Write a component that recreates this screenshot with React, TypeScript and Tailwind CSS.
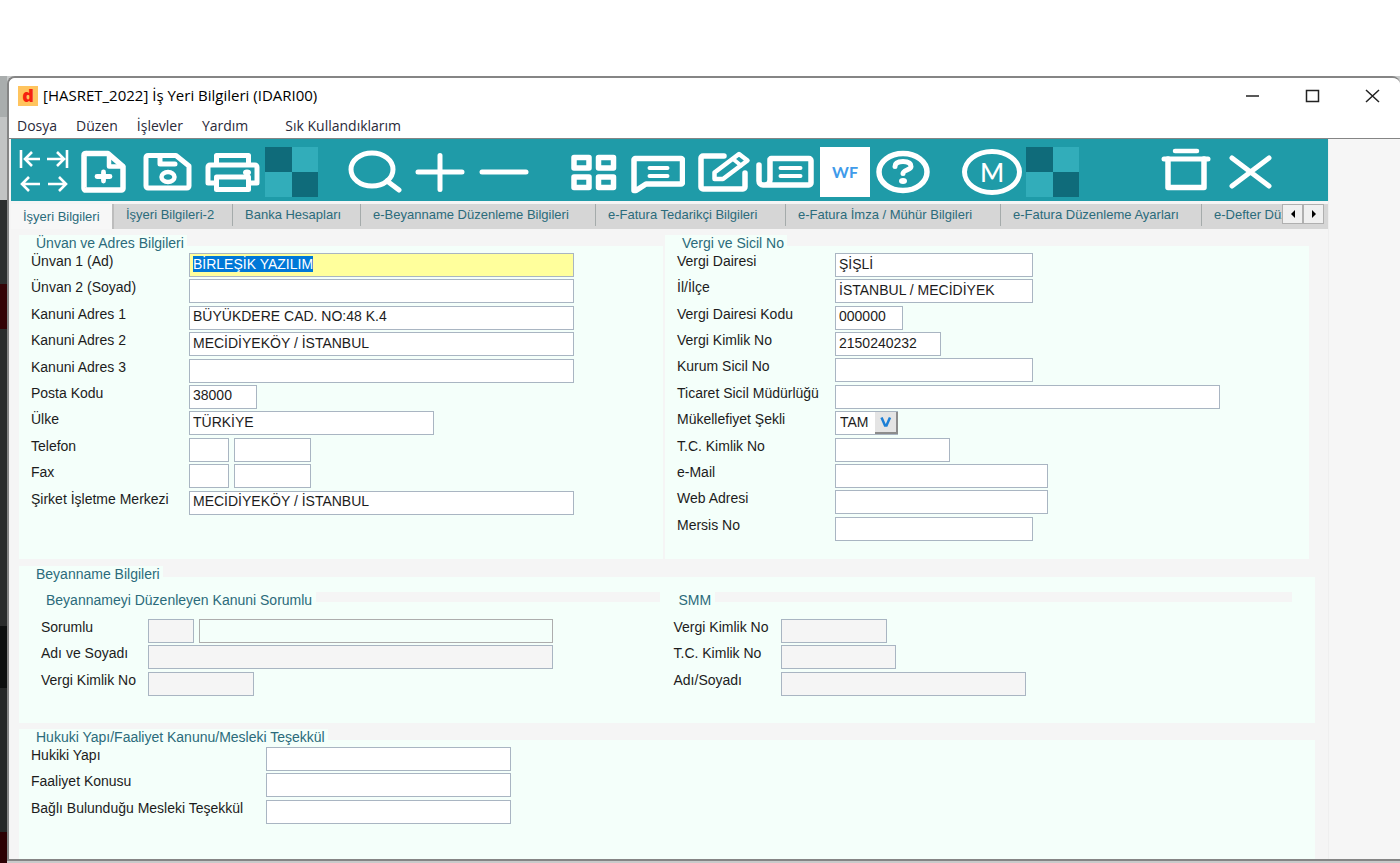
import { useEffect, useRef, type ReactNode } from "react"

interface FieldItem {
  id: string
  label: string
  inputs: { width: string; value?: string; look?: string }[]
}

const WHITE = "bg-white border-[#a9b5c2]"
const DISABLED = "bg-[#f5f5f5] border-[#a9b5c2]"

const unvanFields: FieldItem[] = [
  { id: "unvan1", label: "Ünvan 1 (Ad)", inputs: [{ width: "w-[385px]", value: "BİRLEŞİK YAZILIM", look: "bg-[#ffff9c] border-[#a9b5c2]" }] },
  { id: "unvan2", label: "Ünvan 2 (Soyad)", inputs: [{ width: "w-[385px]" }] },
  { id: "adres1", label: "Kanuni Adres 1", inputs: [{ width: "w-[385px]", value: "BÜYÜKDERE CAD. NO:48 K.4" }] },
  { id: "adres2", label: "Kanuni Adres 2", inputs: [{ width: "w-[385px]", value: "MECİDİYEKÖY / İSTANBUL" }] },
  { id: "adres3", label: "Kanuni Adres 3", inputs: [{ width: "w-[385px]" }] },
  { id: "posta", label: "Posta Kodu", inputs: [{ width: "w-[68px]", value: "38000" }] },
  { id: "ulke", label: "Ülke", inputs: [{ width: "w-[245px]", value: "TÜRKİYE" }] },
  { id: "telefon", label: "Telefon", inputs: [{ width: "w-[40px]" }, { width: "w-[77px]" }] },
  { id: "fax", label: "Fax", inputs: [{ width: "w-[40px]" }, { width: "w-[77px]" }] },
  { id: "merkez", label: "Şirket İşletme Merkezi", inputs: [{ width: "w-[385px]", value: "MECİDİYEKÖY / İSTANBUL" }] },
]

const vergiFields: FieldItem[] = [
  { id: "daire", label: "Vergi Dairesi", inputs: [{ width: "w-[198px]", value: "ŞİŞLİ" }] },
  { id: "ilce", label: "İl/İlçe", inputs: [{ width: "w-[198px]", value: "İSTANBUL / MECİDİYEK" }] },
  { id: "daireKodu", label: "Vergi Dairesi Kodu", inputs: [{ width: "w-[68px]", value: "000000" }] },
  { id: "vkn", label: "Vergi Kimlik No", inputs: [{ width: "w-[106px]", value: "2150240232" }] },
  { id: "kurum", label: "Kurum Sicil No", inputs: [{ width: "w-[198px]" }] },
  { id: "ticaret", label: "Ticaret Sicil Müdürlüğü", inputs: [{ width: "w-[385px]" }] },
  { id: "mukellef", label: "Mükellefiyet Şekli", inputs: [] },
  { id: "tckn", label: "T.C. Kimlik No", inputs: [{ width: "w-[115px]" }] },
  { id: "email", label: "e-Mail", inputs: [{ width: "w-[213px]" }] },
  { id: "web", label: "Web Adresi", inputs: [{ width: "w-[213px]" }] },
  { id: "mersis", label: "Mersis No", inputs: [{ width: "w-[198px]" }] },
]

const sorumluFields: FieldItem[] = [
  {
    id: "sorumlu",
    label: "Sorumlu",
    inputs: [
      { width: "w-[46px]", look: DISABLED },
      { width: "w-[354px]", look: "bg-[#f4fffa] border-[#adadad]" },
    ],
  },
  { id: "sorumluAd", label: "Adı ve Soyadı", inputs: [{ width: "w-[405px]", look: DISABLED }] },
  { id: "sorumluVkn", label: "Vergi Kimlik No", inputs: [{ width: "w-[106px]", look: DISABLED }] },
]

const smmFields: FieldItem[] = [
  { id: "smmVkn", label: "Vergi Kimlik No", inputs: [{ width: "w-[106px]", look: DISABLED }] },
  { id: "smmTckn", label: "T.C. Kimlik No", inputs: [{ width: "w-[115px]", look: DISABLED }] },
  { id: "smmAd", label: "Adı/Soyadı", inputs: [{ width: "w-[245px]", look: DISABLED }] },
]

const hukukiFields: FieldItem[] = [
  { id: "hukuki", label: "Hukiki Yapı", inputs: [{ width: "w-[245px]" }] },
  { id: "faaliyet", label: "Faaliyet Konusu", inputs: [{ width: "w-[245px]" }] },
  { id: "meslek", label: "Bağlı Bulunduğu Mesleki Teşekkül", inputs: [{ width: "w-[245px]" }] },
]

const tabs = [
  { title: "İşyeri Bilgileri-2", width: "w-[119px]" },
  { title: "Banka Hesapları", width: "w-[128px]" },
  { title: "e-Beyanname Düzenleme Bilgileri", width: "w-[235px]" },
  { title: "e-Fatura Tedarikçi Bilgileri", width: "w-[190px]" },
  { title: "e-Fatura İmza / Mühür Bilgileri", width: "w-[215px]" },
  { title: "e-Fatura Düzenleme Ayarları", width: "w-[201px]" },
]

function Fields({ items, labelWidth, height }: { items: FieldItem[]; labelWidth: string; height: string }) {
  return (
    <div className={`grid auto-rows-fr ${height}`}>
      {items.map((item) => (
        <div key={item.id} className="flex items-start">
          <label htmlFor={item.id} className={`shrink-0 whitespace-nowrap leading-[18px] ${labelWidth}`}>
            {item.label}
          </label>
          <div className="flex gap-[5px] pt-px">
            {item.id === "mukellef" && <SekilSelect />}
            {item.inputs.map((input, index) => (
              <input
                key={index}
                id={index === 0 ? item.id : `${item.id}-${index}`}
                aria-label={index === 0 ? undefined : item.label}
                type="text"
                defaultValue={input.value}
                className={`h-[24px] border px-[3px] pb-[3px] outline-none selection:bg-[#0078d7] selection:text-white ${input.width} ${input.look ?? WHITE}`}
              />
            ))}
          </div>
        </div>
      ))}
    </div>
  )
}

function SekilSelect() {
  return (
    <div className="relative">
      <select id="mukellef" className="h-[24px] w-[63px] appearance-none border border-[#a9b5c2] bg-white px-[4px] pb-[3px] outline-none">
        <option>TAM</option>
        <option>DAR</option>
      </select>
      <span className="pointer-events-none absolute top-px right-0 flex h-[22px] w-[23px] items-center justify-center border-r-2 border-b-2 border-[#8c8c8c] bg-[#e4e4e4]">
        <svg width="12" height="12" viewBox="0 0 12 12" fill="none" stroke="#1c7fd6" strokeWidth="2.500">
          <path d="M1.500 1.500l3.500 8h1.500l3.500-8" />
        </svg>
      </span>
    </div>
  )
}

function Group({ title, className, children }: { title: string; className?: string; children: ReactNode }) {
  return (
    <section className={`flex flex-col ${className ?? ""}`}>
      <h2 className="-mb-[6px] h-[17px] w-fit bg-[#f4fffa] pr-[3px] pl-[17px] leading-[17px] text-[#2b6b7b]">
        <span className="relative">{title}</span>
      </h2>
      <div className="flex-1 bg-[#f4fffa] pt-[6px]">{children}</div>
    </section>
  )
}

function SubGroup({ title, children }: { title: string; children: ReactNode }) {
  return (
    <section>
      <div className="flex h-[26px] items-start">
        <h3 className="pr-1 pl-[17px] leading-[17px] text-[#2b6b7b]">{title}</h3>
        <div className="h-[10px] flex-1 bg-[#f5f5f5]" />
      </div>
      <div className="pl-3">{children}</div>
    </section>
  )
}

function ToolButton({ label, width, className, children }: { label: string; width: number; className?: string; children: ReactNode }) {
  return (
    <button type="button" aria-label={label} className={`shrink-0 ${className ?? ""}`}>
      <svg
        width={width}
        height="50"
        viewBox={`0 0 ${width} 50`}
        fill="none"
        stroke="white"
        strokeWidth="5"
        strokeLinecap="round"
        strokeLinejoin="round"
        className="block"
      >
        {children}
      </svg>
    </button>
  )
}

function Checker({ className }: { className?: string }) {
  return (
    <div className={`grid h-[50px] w-[53px] shrink-0 grid-cols-2 ${className ?? ""}`}>
      <div className="bg-[#0f6b7a]" />
      <div className="bg-[#32adba]" />
      <div className="bg-[#32adba]" />
      <div className="bg-[#0f6b7a]" />
    </div>
  )
}

function Toolbar() {
  return (
    <div className="flex h-[62px] items-center bg-[#1f9ba8] pt-[4px] pr-[56px] pl-2">
      <div className="grid w-[50px] grid-cols-2 grid-rows-2">
        {[
          { label: "İlk kayıt", d: "M2 3v18M21 12H6M13 5l-7 7l7 7" },
          { label: "Son kayıt", d: "M23 3v18M3 12h17M13 5l7 7l-7 7" },
          { label: "Önceki kayıt", d: "M21 12H3M10 5l-7 7l7 7" },
          { label: "Sonraki kayıt", d: "M4 12h18M15 5l7 7l-7 7" },
        ].map((arrow) => (
          <button key={arrow.label} type="button" aria-label={arrow.label}>
            <svg width="25" height="25" viewBox="0 0 25 25" fill="none" stroke="white" strokeWidth="2.600" className="block">
              <path d={arrow.d} />
            </svg>
          </button>
        ))}
      </div>
      <ToolButton label="Yeni" width={46} className="ml-3">
        <path d="M5 6.500h22l15 13v22a1.500 1.500 0 0 1-1.500 1.500H5a1.500 1.500 0 0 1-2-1.500V8a1.500 1.500 0 0 1 2-1.500z" strokeWidth="5.500" />
        <path d="M28 8v11.500H42" strokeWidth="4.500" />
        <path d="M22.500 25v9M16 29.500h13" strokeWidth="4.800" />
      </ToolButton>
      <ToolButton label="Kaydet" width={50} className="ml-4">
        <path d="M5 8.500h28l13 10.500V39a2 2 0 0 1-2 2H5a2 2 0 0 1-2-2V10.500a2 2 0 0 1 2-2z" strokeWidth="5" />
        <path d="M17 9v8h15" strokeWidth="5" />
        <ellipse cx="25" cy="30" rx="6.500" ry="5" strokeWidth="4.500" />
      </ToolButton>
      <ToolButton label="Yazdır" width={55} className="ml-3">
        <path d="M11.500 17V8.500h32V17" />
        <path d="M11 36H3V20a2 2 0 0 1 2-2h45a2 2 0 0 1 2 2v16h-8" />
        <path d="M11.500 30h32v12.500h-32z" />
        <ellipse cx="42" cy="25.500" rx="4" ry="3" fill="white" stroke="none" />
      </ToolButton>
      <Checker className="ml-[5px]" />
      <ToolButton label="Ara" width={54} className="ml-[30px]">
        <ellipse cx="24" cy="22.500" rx="21" ry="16.500" />
        <path d="M39 34l12 9" />
      </ToolButton>
      <ToolButton label="Ekle" width={50} className="ml-[13px]">
        <path d="M25 8.500v34M3 25h44" />
      </ToolButton>
      <ToolButton label="Sil" width={50} className="ml-[14px]">
        <path d="M3 25h44" />
      </ToolButton>
      <ToolButton label="Liste" width={46} className="ml-[42px]">
        <path d="M3 10.500h15v10.500H3zM27.500 10.500h15v10.500h-15zM3 30h15v10.500H3zM27.500 30h15v10.500h-15z" strokeWidth="5.500" />
      </ToolButton>
      <ToolButton label="Mesaj" width={54} className="ml-[14px]">
        <path d="M4 11.500h46a1.500 1.500 0 0 1 1.500 1.500v22.500A1.500 1.500 0 0 1 50 37H15L5 43.500H3V12.500z" strokeWidth="5.500" />
        <path d="M18.500 21h18M18.500 29h18" strokeWidth="4" />
      </ToolButton>
      <ToolButton label="Düzenle" width={53} className="ml-[13px]">
        <path d="M26 9H5a2 2 0 0 0-2 2v29a2 2 0 0 0 2 2h40a2 2 0 0 0 2-2V26" strokeWidth="5.500" />
        <path d="M16.500 32v-6.500L41 7l8.500 6.500L25 32z" strokeWidth="4.500" />
        <path d="M35 12l8 6.500" strokeWidth="4" />
      </ToolButton>
      <ToolButton label="Haberler" width={58} className="ml-[5px]">
        <path d="M15 11.500h38a2 2 0 0 1 2 2V36a2 2 0 0 1-2 2H7a4 4 0 0 1-4-4V18M14 12.500V33a5 5 0 0 1-5 5" strokeWidth="5.500" />
        <path d="M24.500 21h20M24.500 29h20" strokeWidth="4" />
      </ToolButton>
      <button type="button" className="ml-[6px] h-[50px] w-[50px] shrink-0 bg-white font-['Lato'] text-[16px] font-bold text-[#3f9bea]">
        WF
      </button>
      <ToolButton label="Yardım" width={54} className="ml-[6px]">
        <ellipse cx="27" cy="25" rx="24" ry="18.500" strokeWidth="5.500" />
        <path d="M19 19.500c0-3.500 3.500-5 8-5s8 1.500 8 5c0 3.500-8 3.500-8 7" />
        <ellipse cx="27" cy="34" rx="4" ry="3" fill="white" stroke="none" />
      </ToolButton>
      <button
        type="button"
        className="ml-8 flex h-[46px] w-[60px] shrink-0 items-center justify-center rounded-[50%] border-[5px] border-white font-['Lato'] text-[26px] font-medium text-white"
      >
        M
      </button>
      <Checker className="ml-1" />
      <ToolButton label="Çöp kutusu" width={50} className="ml-auto">
        <path d="M14 4h22" strokeWidth="4.500" />
        <path d="M3 12h44" />
        <path d="M7 12v28.500h36V12" strokeWidth="5.500" />
      </ToolButton>
      <ToolButton label="Kapat" width={43} className="ml-[18px]">
        <path d="M3 11l37 28M40 11L3 39" />
      </ToolButton>
    </div>
  )
}

function TabBar() {
  return (
    <div className="mt-[3px] flex h-[25px] bg-[#d6d6d6] text-[13px] text-[#2b6b7b]" role="tablist">
      <button type="button" role="tab" aria-selected="true" className="w-[103px] shrink-0 border-r-2 border-[#bdbdbd] bg-[#f7f7f7] pl-3 text-left">
        İşyeri Bilgileri
      </button>
      <div className="flex h-[22px] min-w-0 flex-1 overflow-hidden">
        {tabs.map((tab) => (
          <button
            key={tab.title}
            type="button"
            role="tab"
            aria-selected="false"
            className={`shrink-0 border-r border-[#a5abab] pl-3 text-left whitespace-nowrap ${tab.width}`}
          >
            {tab.title}
          </button>
        ))}
        <button type="button" role="tab" aria-selected="false" className="shrink-0 pl-3 whitespace-nowrap">
          e-Defter Düzenleme
        </button>
      </div>
      <div className="mr-[4px] flex h-[20px]">
        {["M7 1L3 5l4 4z", "M3 1l4 4l-4 4z"].map((d, index) => (
          <button
            key={d}
            type="button"
            aria-label={index === 0 ? "Sola kaydır" : "Sağa kaydır"}
            className="flex w-[21px] items-center justify-center border border-[#b0b0b0] bg-[#f0f0f0]"
          >
            <svg width="10" height="10" viewBox="0 0 10 10" fill="black">
              <path d={d} />
            </svg>
          </button>
        ))}
      </div>
    </div>
  )
}

// What shows of the desktop to the left of the window
function DesktopEdge() {
  return (
    <div className="flex w-[7px] shrink-0 flex-col">
      <div className="h-[41px] bg-[#a9adad]" />
      <div className="h-[83px] bg-[#c2c4c4]" />
      <div className="h-[84px] bg-[#2c2e2e]" />
      <div className="h-[45px] bg-[#330306]" />
      <div className="h-[297px] bg-[#2a2c2c]" />
      <div className="h-[62px] bg-[#0d0f0f]" />
      <div className="h-[144px] bg-[#252727]" />
      <div className="flex-1 bg-[#2c0003]" />
    </div>
  )
}

export default function App() {
  const formRef = useRef<HTMLFormElement>(null)

  useEffect(() => {
    const first = formRef.current?.querySelector("input")
    first?.focus()
    first?.select()
  }, [])

  return (
    <div className="flex min-h-screen flex-col bg-white pt-[76px] font-['Liberation_Sans',sans-serif] text-[14px] text-[#1c1c1c]">
      <div className="flex flex-1 bg-[#c8caca]">
        <DesktopEdge />
        <main className="mb-[2px] flex min-w-0 flex-1 flex-col overflow-hidden rounded-t-lg border-t-2 border-b-2 border-l-2 border-[#858585] bg-[#f5f5f5]">
          <header className="border-b border-[#858585] bg-white font-['Open_Sans',sans-serif]">
            <div className="flex h-[35px] items-center pl-[9px]">
              <span className="flex h-5 w-5 items-center justify-center bg-[#ffc45e] pb-[2px] text-[18px] leading-none font-extrabold text-[#f5220f]">
                d
              </span>
              <h1 className="ml-[5px] flex-1 text-[15px] text-black">[HASRET_2022] İş Yeri Bilgileri (IDARI00)</h1>
              <div className="flex gap-[32px] pr-[13px]">
                {["M7 14h13", "M7.500 8.500h12v11h-12z", "M7 8l13 12M20 8L7 20"].map((d, index) => (
                  <button key={d} type="button" aria-label={["Küçült", "Ekranı kapla", "Kapat"][index]}>
                    <svg width="28" height="28" viewBox="0 0 28 28" fill="none" stroke="#222" strokeWidth="1.500" className="block">
                      <path d={d} />
                    </svg>
                  </button>
                ))}
              </div>
            </div>
            <nav className="flex h-[25px] items-center gap-[19px] pl-2 text-[14px] font-medium text-[#2a2a3a]">
              <button type="button">Dosya</button>
              <button type="button">Düzen</button>
              <button type="button">İşlevler</button>
              <button type="button">Yardım</button>
              <button type="button" className="ml-[18px]">Sık Kullandıklarım</button>
            </nav>
          </header>

          <div className="flex min-w-0 flex-1">
            <div className="ml-[2px] flex min-w-0 flex-1 flex-col">
              <Toolbar />
              <TabBar />
              <form ref={formRef} className="flex flex-1 flex-col pt-[6px] pr-[13px] pl-2">
                <div className="mr-[6px] grid grid-cols-2 gap-x-[2px]">
                  <Group title="Ünvan ve Adres Bilgileri">
                    <div className="pl-3">
                      <Fields items={unvanFields} labelWidth="w-[158px]" height="h-[264px]" />
                    </div>
                  </Group>
                  <Group title="Vergi ve Sicil No">
                    <div className="pb-[17px] pl-3">
                      <Fields items={vergiFields} labelWidth="w-[158px]" height="h-[290px]" />
                    </div>
                  </Group>
                </div>

                <Group title="Beyanname Bilgileri" className="mt-[7px]">
                  <div className="grid grid-cols-2 gap-x-[2px] pt-[9px] pr-[23px] pb-[26px] pl-[10px]">
                    <SubGroup title="Beyannameyi Düzenleyen Kanuni Sorumlu">
                      <Fields items={sorumluFields} labelWidth="w-[107px]" height="h-[79px]" />
                    </SubGroup>
                    <SubGroup title="SMM">
                      <Fields items={smmFields} labelWidth="w-[107px]" height="h-[79px]" />
                    </SubGroup>
                  </div>
                </Group>

                <Group title="Hukuki Yapı/Faaliyet Kanunu/Mesleki Teşekkül" className="mt-[6px] flex-1">
                  <div className="pl-3">
                    <Fields items={hukukiFields} labelWidth="w-[235px]" height="h-[79px]" />
                  </div>
                </Group>
              </form>
            </div>
            <aside className="w-[72px] shrink-0 border-l border-[#efefef] bg-[#f6f6f6]" />
          </div>
        </main>
      </div>
    </div>
  )
}
